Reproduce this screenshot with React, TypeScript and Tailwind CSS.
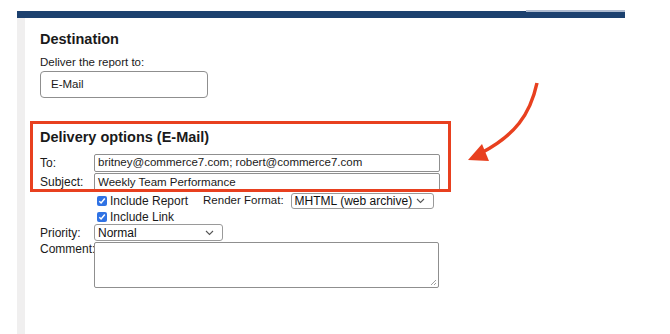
import React from "react"

const font = { fontFamily: '"Liberation Sans", Arial, sans-serif' }

function Chevron() {
  return (
    <svg width="9" height="6" viewBox="0 0 9 6" className="absolute right-[8px] top-1/2 -translate-y-1/2">
      <path d="M1 1l3.5 3.5L8 1" fill="none" stroke="#555" strokeWidth="1.1" />
    </svg>
  )
}

function Check({ label }: { label: string }) {
  return (
    <label className="flex items-center gap-[3px] text-[12px] text-[#1a1a1a]">
      <span className="flex items-center justify-center w-[10px] h-[10px] rounded-[2px] bg-[#2f72e4]">
        <svg width="8" height="8" viewBox="0 0 8 8">
          <path d="M1.3 4.2l1.8 1.8L6.8 1.6" fill="none" stroke="#fff" strokeWidth="1.5" />
        </svg>
      </span>
      {label}
    </label>
  )
}

function Select({ value, className }: { value: string; className: string }) {
  return (
    <div className={`relative flex items-center border border-[#9a9a9a] rounded-[3px] bg-white pl-[3px] text-[12px] text-[#111] ${className}`}>
      {value}
      <Chevron />
    </div>
  )
}

export default function App() {
  return (
    <div className="relative w-[670px] h-[334px] bg-white pt-[11px] pl-[17px] overflow-hidden" style={font}>
      <div className="w-[608px]">
        <div className="relative h-[7px] bg-[#1c416f]">
          <div className="absolute right-0 -top-[1px] w-[99px] h-[2px] bg-[#aebbd0]" />
        </div>
        <div className="flex h-[320px]">
          <div className="w-[8px] bg-[#f0efef]" />
          <div className="pl-[15px] pt-[12px] text-[#1a1a1a]">
            <h2 className="text-[14.5px] font-bold leading-[18px]">Destination</h2>
            <p className="mt-[7px] text-[11.5px] leading-[14px]">Deliver the report to:</p>
            <div className="mt-[2px] w-[168px] h-[27px] border border-[#8f8f8f] rounded-[4px] flex items-center pl-[10px] text-[11.5px]">
              E-Mail
            </div>

            <div className="relative mt-[26px] w-[411px]">
              <div className="absolute -left-[10px] -top-[3px] w-[421px] h-[71px] border-[3px] border-[#e8401f]" />
              <h2 className="pt-[4px] text-[14.5px] font-bold leading-[18px]">Delivery options (E-Mail)</h2>
              <div className="mt-[8px] grid grid-cols-[54px_346px] text-[12px]">
                <span className="flex items-center">To:</span>
                <div className="h-[18px] border border-[#8f8f8f] rounded-[2px] flex items-center pl-[3px] text-[11.5px]">
                  britney@commerce7.com; robert@commerce7.com
                </div>
                <span className="flex items-center">Subject:</span>
                <div className="mt-[1px] h-[19px] border border-[#8f8f8f] rounded-[2px] flex items-center pl-[3px] text-[11.5px]">
                  Weekly Team Performance
                </div>
              </div>
            </div>

            <div className="mt-[1px] grid grid-cols-[54px_350px] text-[12px]">
              <span />
              <div className="flex items-center h-[16px] pl-[3px]">
                <Check label="Include Report" />
                <span className="ml-[15px] text-[11.5px]">Render Format:</span>
                <Select value="MHTML (web archive)" className="ml-[7px] w-[143px] h-[16px]" />
              </div>
              <span />
              <div className="mt-[1px] h-[14px] flex items-center pl-[3px]">
                <Check label="Include Link" />
              </div>
              <span className="flex items-center">Priority:</span>
              <Select value="Normal" className="w-[129px] h-[17px]" />
              <span className="leading-[14px]">Comment:</span>
              <div className="relative h-[46px] w-[345px] border border-[#8f8f8f] rounded-[2px]">
                <svg width="7" height="7" viewBox="0 0 7 7" className="absolute right-[1px] bottom-[1px]">
                  <path d="M1 6L6 1M4 6L6 4" stroke="#888" strokeWidth="0.8" />
                </svg>
              </div>
            </div>
          </div>
        </div>
      </div>

      <svg width="670" height="334" className="absolute left-0 top-0 pointer-events-none">
        <path d="M537 83 C 530 115, 515 135, 481 153" fill="none" stroke="#e8401f" strokeWidth="3.5" />
        <path d="M468 160 L482 144 L489 161 Z" fill="#e8401f" />
      </svg>
    </div>
  )
}
